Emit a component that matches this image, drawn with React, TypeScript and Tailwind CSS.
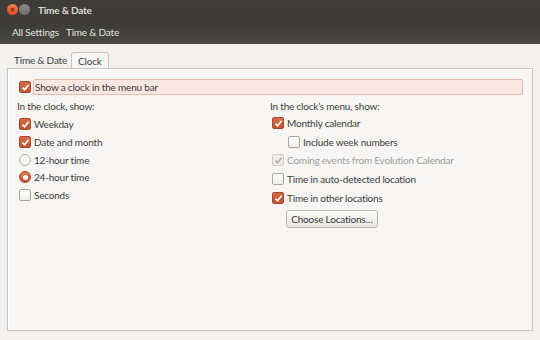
import React from 'react';

const font = { fontFamily: 'Lato, "Noto Sans", sans-serif' };

function Check({ checked = false, disabled = false }: { checked?: boolean; disabled?: boolean }) {
  if (disabled) {
    return (
      <span className="flex h-[12px] w-[12px] shrink-0 items-center justify-center rounded-[2px] border border-[#cfcdc9] bg-[#eceae7]">
        <svg width="9" height="9" viewBox="0 0 9 9">
          <path d="M1.5 4.6 L3.6 6.8 L7.6 1.8" fill="none" stroke="#b3b0ab" strokeWidth="1.6" />
        </svg>
      </span>
    );
  }
  if (checked) {
    return (
      <span className="flex h-[12px] w-[12px] shrink-0 items-center justify-center rounded-[2px] border border-[#a9472a] bg-gradient-to-b from-[#d66c47] to-[#c0532f]">
        <svg width="9" height="9" viewBox="0 0 9 9">
          <path d="M1.5 4.6 L3.6 6.8 L7.6 1.8" fill="none" stroke="#ffffff" strokeWidth="1.7" />
        </svg>
      </span>
    );
  }
  return <span className="h-[12px] w-[12px] shrink-0 rounded-[2px] border border-[#a8a5a0] bg-gradient-to-b from-[#ffffff] to-[#f0efed]" />;
}

function Radio({ checked = false }: { checked?: boolean }) {
  if (checked) {
    return (
      <span className="flex h-[12px] w-[12px] shrink-0 items-center justify-center rounded-full border border-[#a9472a] bg-gradient-to-b from-[#e07a52] to-[#c2532f]">
        <span className="h-[5px] w-[5px] rounded-full bg-white" />
      </span>
    );
  }
  return <span className="h-[12px] w-[12px] shrink-0 rounded-full border border-[#b3b0ab] bg-gradient-to-b from-[#ffffff] to-[#f2f1ef]" />;
}

function Row({ children, label, muted = false, className = '' }: { children: React.ReactNode; label: string; muted?: boolean; className?: string }) {
  return (
    <div className={`flex h-[18px] items-center gap-[3px] ${className}`}>
      {children}
      <span className={muted ? 'text-[#a19e99]' : 'text-[#3c3c3c]'}>{label}</span>
    </div>
  );
}

export default function App() {
  return (
    <div className="flex h-[340px] w-[540px] flex-col overflow-hidden bg-[#f2f1f0] text-[10px] leading-[14px] tracking-[-0.2px]" style={font}>
      {/* title bar + toolbar */}
      <div className="bg-gradient-to-b from-[#3d3c38] via-[#3c3b37] to-[#4a4944]">
        <div className="flex h-[19px] items-center pl-[7px]">
          <span className="flex h-[11px] w-[11px] items-center justify-center rounded-full bg-gradient-to-b from-[#f4825a] to-[#d9471e]">
            <svg width="5" height="5" viewBox="0 0 6 6">
              <path d="M1 1 L5 5 M5 1 L1 5" stroke="#7a2a10" strokeWidth="1.3" />
            </svg>
          </span>
          <span className="ml-[1px] h-[11px] w-[11px] rounded-full bg-gradient-to-b from-[#8f8e8a] to-[#6c6b67]" />
          <span className="ml-[8px] text-[10px] font-bold text-[#dfdbd2]">Time &amp; Date</span>
        </div>
        <div className="flex h-[25px] items-center gap-[7px] pl-[12px] text-[#e4e1da]">
          <span>All Settings</span>
          <span>Time &amp; Date</span>
        </div>
      </div>

      {/* tabs */}
      <div className="mt-[8px] flex h-[16px] items-end pl-[7px]">
        <div className="flex h-[16px] items-center pl-[7px] pr-[4px] text-[#3c3c3c]">Time &amp; Date</div>
        <div className="-mb-px flex h-[17px] items-center rounded-t-[3px] border border-b-0 border-[#c8c5c0] bg-[#f7f6f5] px-[6px] text-[#3c3c3c]">
          Clock
        </div>
      </div>

      {/* notebook panel */}
      <div className="mx-[7px] h-[263px] border border-[#c8c5c0] bg-[#f7f6f5] shadow-[inset_1px_1px_0_#ffffff]">
        <div className="mt-[10px] flex h-[16px] items-center pl-[11px] pr-[9px]">
          <Check checked />
          <div className="ml-[2px] flex h-[16px] flex-1 items-center rounded-[2px] border border-[#e7b9a9] bg-[#f9e7e1] pl-[1px] text-[#3c3c3c]">
            Show a clock in the menu bar
          </div>
        </div>

        <div className="mt-[4px] flex">
          <div className="w-[262px] pl-[9px]">
            <div className="h-[14px] text-[#3c3c3c]">In the clock, show:</div>
            <div className="pl-[2px]">
              <Row label="Weekday" className="mt-[2px]"><Check checked /></Row>
              <Row label="Date and month"><Check checked /></Row>
              <Row label="12-hour time"><Radio /></Row>
              <Row label="24-hour time" className="!h-[16px]"><Radio checked /></Row>
              <Row label="Seconds" className="mt-[1px]"><Check /></Row>
            </div>
          </div>
          <div className="flex-1">
            <div className="h-[14px] text-[#3c3c3c]">In the clock’s menu, show:</div>
            <div className="pl-[2px]">
              <Row label="Monthly calendar" className="mt-[1px]"><Check checked /></Row>
              <Row label="Include week numbers" className="ml-[16px] mt-[1px]"><Check /></Row>
              <Row label="Coming events from Evolution Calendar" muted><Check disabled /></Row>
              <Row label="Time in auto-detected location" className="mt-[1px]"><Check /></Row>
              <Row label="Time in other locations" className="mt-[1px]"><Check checked /></Row>
              <div className="ml-[14px] mt-[3px] inline-flex h-[18px] w-[92px] items-center justify-center rounded-[3px] border border-[#b8b5b0] bg-gradient-to-b from-[#fbfbfa] to-[#e9e7e4] text-[#3c3c3c] shadow-[inset_0_1px_0_#ffffff]">
                Choose Locations…
              </div>
            </div>
          </div>
        </div>
      </div>
    </div>
  );
}
